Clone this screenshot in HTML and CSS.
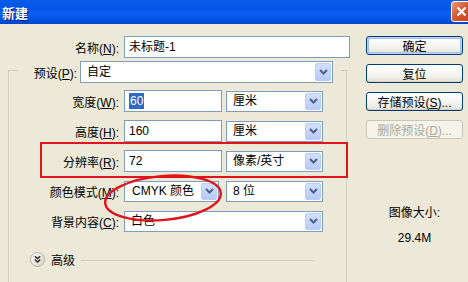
FILE: index.html
```html
<!DOCTYPE html>
<html lang="zh">

<head>
    <meta charset="UTF-8">
    <title>新建</title>
    <link rel="stylesheet" href="styles.css">
</head>

<body>
    <div class="window">
        <div class="titlebar">
            <span class="title">新建</span>
            <span class="close">
                <svg width="11" height="11" viewBox="0 0 11 11"><path d="M1.5 1.5 L9.5 9.5 M9.5 1.5 L1.5 9.5" stroke="#fff" stroke-width="2.2" /></svg>
            </span>
        </div>

        <div class="content">
            <div class="main">
                <div class="row name-row">
                    <label class="lbl">名称(<u>N</u>):</label>
                    <div class="field name-field">未标题-1</div>
                </div>

                <div class="group">
                    <div class="legend">
                        <label class="legend-lbl">预设(<u>P</u>):</label>
                        <div class="select preset">自定<span class="drop"><svg width="9" height="6" viewBox="0 0 9 6"><path d="M1 1 L4.5 4.5 L8 1" fill="none" stroke="#4d6185" stroke-width="2" /></svg></span></div>
                    </div>

                    <div class="rows">
                        <div class="row">
                            <label class="lbl">宽度(<u>W</u>):</label>
                            <div class="field num"><span class="sel">60</span></div>
                            <div class="select unit">厘米<span class="drop"><svg width="9" height="6" viewBox="0 0 9 6"><path d="M1 1 L4.5 4.5 L8 1" fill="none" stroke="#4d6185" stroke-width="2" /></svg></span></div>
                        </div>
                        <div class="row">
                            <label class="lbl">高度(<u>H</u>):</label>
                            <div class="field num">160</div>
                            <div class="select unit">厘米<span class="drop"><svg width="9" height="6" viewBox="0 0 9 6"><path d="M1 1 L4.5 4.5 L8 1" fill="none" stroke="#4d6185" stroke-width="2" /></svg></span></div>
                        </div>
                        <div class="row">
                            <label class="lbl">分辨率(<u>R</u>):</label>
                            <div class="field num">72</div>
                            <div class="select unit">像素/英寸<span class="drop"><svg width="9" height="6" viewBox="0 0 9 6"><path d="M1 1 L4.5 4.5 L8 1" fill="none" stroke="#4d6185" stroke-width="2" /></svg></span></div>
                        </div>
                        <div class="row">
                            <label class="lbl">颜色模式(<u>M</u>):</label>
                            <div class="select mode">CMYK 颜色<span class="drop"><svg width="9" height="6" viewBox="0 0 9 6"><path d="M1 1 L4.5 4.5 L8 1" fill="none" stroke="#4d6185" stroke-width="2" /></svg></span></div>
                            <div class="select unit">8 位<span class="drop"><svg width="9" height="6" viewBox="0 0 9 6"><path d="M1 1 L4.5 4.5 L8 1" fill="none" stroke="#4d6185" stroke-width="2" /></svg></span></div>
                        </div>
                        <div class="row">
                            <label class="lbl">背景内容(<u>C</u>):</label>
                            <div class="select bg">白色<span class="drop"><svg width="9" height="6" viewBox="0 0 9 6"><path d="M1 1 L4.5 4.5 L8 1" fill="none" stroke="#4d6185" stroke-width="2" /></svg></span></div>
                        </div>
                    </div>

                    <div class="advanced">
                        <span class="adv-btn">
                            <svg width="15" height="15" viewBox="0 0 15 15">
                                <defs>
                                    <linearGradient id="advg" x1="0" y1="0" x2="1" y2="1">
                                        <stop offset="0" stop-color="#ffffff" />
                                        <stop offset="1" stop-color="#d6d3c6" />
                                    </linearGradient>
                                </defs>
                                <circle cx="7.5" cy="7.5" r="7" fill="url(#advg)" stroke="#b5b2a4" />
                                <path d="M4.8 4.2 L7.5 6.6 L10.2 4.2 M4.8 7.6 L7.5 10 L10.2 7.6" fill="none" stroke="#222" stroke-width="1.4" />
                            </svg>
                        </span>
                        <span class="adv-text">高级</span>
                        <span class="adv-line"></span>
                    </div>
                </div>
            </div>

            <div class="side">
                <button class="btn default">确定</button>
                <button class="btn">复位</button>
                <button class="btn">存储预设(<u>S</u>)...</button>
                <button class="btn disabled">删除预设(<u>D</u>)...</button>
                <div class="size-label">图像大小:</div>
                <div class="size-value">29.4M</div>
            </div>
        </div>

        <!-- hand-drawn marks on the screenshot -->
        <div class="mark-rect"></div>
        <svg class="mark-ellipse" width="130" height="60" viewBox="0 0 130 60">
            <ellipse cx="65" cy="30" rx="58" ry="22" fill="none" stroke="#e0141c" stroke-width="2.4" transform="rotate(-5 65 30)" />
        </svg>
    </div>
</body>

</html>
```

FILE: styles.css
```css
* {
    box-sizing: border-box;
}

body {
    margin: 0;
    font-family: "Liberation Sans", "Noto Sans CJK SC", sans-serif;
    font-size: 12px;
    color: #000;
}

.window {
    position: relative;
    width: 468px;
    height: 282px;
    overflow: hidden;
    background: #ece9d8;
}

.titlebar {
    height: 24px;
    display: flex;
    justify-content: space-between;
    align-items: center;
    background: linear-gradient(#0a5ce6 0%, #0456e8 30%, #0a5fef 60%, #0350e0 85%, #0042c8 100%);
}

.title {
    padding-left: 2px;
    color: #fff;
    font-size: 13px;
    font-weight: bold;
    text-shadow: 1px 1px 0 #0a1e6e;
}

.close {
    width: 21px;
    height: 21px;
    margin-right: -4px;
    margin-top: -2px;
    display: flex;
    align-items: center;
    justify-content: center;
    border: 1px solid #fff;
    border-radius: 3px;
    background: linear-gradient(135deg, #ec9a7d 0%, #d85a35 45%, #c23f18 100%);
}

.content {
    display: flex;
}

.main {
    width: 352px;
    padding-top: 12px;
}

.row {
    display: flex;
    align-items: center;
    height: 22px;
}

.lbl {
    width: 124px;
    padding-right: 5px;
    text-align: right;
    white-space: nowrap;
}

.rows .lbl {
    width: 115px;
}

.field {
    height: 22px;
    line-height: 20px;
    padding-left: 4px;
    border: 1px solid #7f9db9;
    background: #fff;
}

.name-field {
    width: 226px;
}

.num {
    width: 98px;
    margin-right: 4px;
}

.sel {
    background: #316ac5;
    color: #fff;
    padding: 1px 1px;
}

.select {
    position: relative;
    height: 21px;
    line-height: 19px;
    padding-left: 6px;
    border: 1px solid #7f9db9;
    background: #fff;
    white-space: nowrap;
}

.drop {
    position: absolute;
    top: 1px;
    right: 1px;
    bottom: 1px;
    width: 16px;
    display: flex;
    align-items: center;
    justify-content: center;
    border-radius: 2px;
    border: 1px solid #b9cdf7;
    background: linear-gradient(#d3e0fd, #b7cbf8);
}

.unit {
    width: 97px;
}

.mode {
    width: 95px;
    margin-right: 7px;
    padding-left: 7px;
}

.bg {
    width: 199px;
}

.group {
    margin: 12px 0 0 8px;
    width: 339px;
    height: 240px;
    border: 1px solid #d0d0bf;
    border-bottom: none;
}

.legend {
    display: flex;
    align-items: center;
    width: 323px;
    margin: -10px 0 0 9px;
    background: #ece9d8;
}

.legend-lbl {
    width: 62px;
    padding-right: 3px;
    text-align: right;
}

.preset {
    width: 253px;
    height: 22px;
    line-height: 20px;
}

.rows {
    margin-top: 7px;
    display: flex;
    flex-direction: column;
    gap: 8px;
}

.advanced {
    display: flex;
    align-items: center;
    margin-top: 19px;
    padding-left: 21px;
}

.adv-btn {
    display: flex;
}

.adv-text {
    margin-left: 6px;
}

.adv-line {
    flex: 1;
    height: 1px;
    margin: 1px 32px 0 6px;
    background: #d0d0bf;
}

.side {
    width: 116px;
    padding: 12px 0 0 14px;
    display: flex;
    flex-direction: column;
    align-items: flex-start;
}

.btn {
    width: 97px;
    height: 19px;
    margin-bottom: 9px;
    padding: 0;
    font: inherit;
    color: #000;
    border: 1px solid #003c74;
    border-radius: 3px;
    background: linear-gradient(#ffffff, #f4f3ee 60%, #e3e1d7);
    box-shadow: inset 0 -1px 0 #d6d0c5;
}

.btn.default {
    box-shadow: inset 0 0 0 1px #bcd2f6, inset 0 0 0 2px #a5bff0;
}

.btn.disabled {
    color: #aca899;
    border-color: #c9c7ba;
    background: #f5f4ea;
    box-shadow: none;
}

.size-label,
.size-value {
    width: 97px;
    text-align: center;
    line-height: 16px;
}

.size-label {
    margin-top: 57px;
}

.size-value {
    margin-top: 9px;
}

.mark-rect {
    position: absolute;
    left: 40px;
    top: 142px;
    width: 308px;
    height: 36px;
    border: 2px solid #e0141c;
}

.mark-ellipse {
    position: absolute;
    left: 98px;
    top: 168px;
}
```
